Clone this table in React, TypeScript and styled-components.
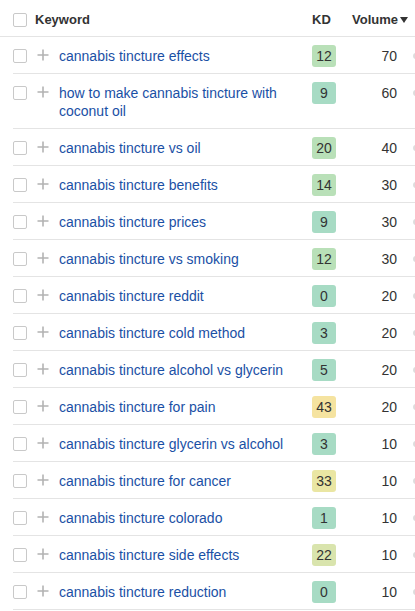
import React from "react";
import styled, { createGlobalStyle } from "styled-components";

const Global = createGlobalStyle`
  html, body { margin: 0; padding: 0; background: #fff; overflow: hidden; }
  body { font-family: "Liberation Sans", Arial, Helvetica, sans-serif; color: #333; }
`;

type Row = { kw: string; kd: number; vol: number };

const rows: Row[] = [
  { kw: "cannabis tincture effects", kd: 12, vol: 70 },
  { kw: "how to make cannabis tincture with coconut oil", kd: 9, vol: 60 },
  { kw: "cannabis tincture vs oil", kd: 20, vol: 40 },
  { kw: "cannabis tincture benefits", kd: 14, vol: 30 },
  { kw: "cannabis tincture prices", kd: 9, vol: 30 },
  { kw: "cannabis tincture vs smoking", kd: 12, vol: 30 },
  { kw: "cannabis tincture reddit", kd: 0, vol: 20 },
  { kw: "cannabis tincture cold method", kd: 3, vol: 20 },
  { kw: "cannabis tincture alcohol vs glycerin", kd: 5, vol: 20 },
  { kw: "cannabis tincture for pain", kd: 43, vol: 20 },
  { kw: "cannabis tincture glycerin vs alcohol", kd: 3, vol: 10 },
  { kw: "cannabis tincture for cancer", kd: 33, vol: 10 },
  { kw: "cannabis tincture colorado", kd: 1, vol: 10 },
  { kw: "cannabis tincture side effects", kd: 22, vol: 10 },
  { kw: "cannabis tincture reduction", kd: 0, vol: 10 },
];

const kdColor = (kd: number) => {
  if (kd <= 10) return "#a7dbc4";
  if (kd <= 20) return "#b9e0b8";
  if (kd <= 30) return "#d9e4ad";
  if (kd <= 40) return "#eae6a3";
  return "#f5e3a0";
};

const Table = styled.div`
  width: 415px;
`;

const Header = styled.div`
  display: grid;
  grid-template-columns: 22px 1fr 40px 56px 7px;
  align-items: center;
  height: 37px;
  box-sizing: border-box;
  padding: 3px 0 0 13px;
  border-bottom: 1px solid #e4e4e4;
  font-size: 13px;
  font-weight: bold;
  color: #333;
`;

const HeadCell = styled.div<{ $right?: boolean }>`
  display: flex;
  align-items: center;
  justify-content: ${(p) => (p.$right ? "flex-end" : "flex-start")};
  white-space: nowrap;
`;

const SortArrow = styled.span`
  display: inline-block;
  width: 0;
  height: 0;
  margin-left: 2px;
  border-left: 4px solid transparent;
  border-right: 4px solid transparent;
  border-top: 6px solid #333;
`;

const Checkbox = styled.span`
  display: block;
  width: 14px;
  height: 14px;
  box-sizing: border-box;
  border: 1px solid #c9c9c9;
  border-radius: 2px;
  background: #fff;
`;

const RowBox = styled.div`
  display: grid;
  grid-template-columns: 24px 22px 1fr 40px 45px 18px;
  align-items: start;
  margin-left: 13px;
  padding: 9px 0;
  border-bottom: 1px solid #e4e4e4;
  font-size: 14px;
  line-height: 18px;
`;

const CheckCell = styled.div`
  padding-top: 3px;
  height: 15px;
`;

const PlusCell = styled.div`
  padding-top: 3px;
  height: 12px;
  svg { display: block; }
`;

const Keyword = styled.a`
  display: block;
  color: #1a50a5;
  text-decoration: none;
  padding-right: 10px;
  padding-top: 1px;
  margin-bottom: -1px;
`;

const KdCell = styled.div`
  height: 18px;
`;

const Badge = styled.span<{ $bg: string }>`
  display: flex;
  align-items: center;
  justify-content: center;
  width: 24px;
  height: 22px;
  margin-top: -1px;
  border-radius: 3px;
  background: ${(p) => p.$bg};
  color: #333;
  font-size: 14px;
`;

const Volume = styled.div`
  text-align: right;
  color: #333;
  padding-top: 1px;
  height: 17px;
`;

const Edge = styled.div`
  padding: 7px 0 0 16px;
  height: 11px;
  span {
    display: block;
    width: 6px;
    height: 6px;
    border-radius: 50%;
    background: #dcdcdc;
  }
`;

const Plus = () => (
  <svg width="12" height="12" viewBox="0 0 12 12">
    <path d="M6 0.5v11M0.5 6h11" stroke="#b3b3b3" strokeWidth="1.6" fill="none" />
  </svg>
);

export default function App() {
  return (
    <Table>
      <Global />
      <Header>
        <HeadCell>
          <Checkbox />
        </HeadCell>
        <HeadCell>Keyword</HeadCell>
        <HeadCell>KD</HeadCell>
        <HeadCell $right>
          Volume
          <SortArrow />
        </HeadCell>
        <HeadCell />
      </Header>
      {rows.map((r) => (
        <RowBox key={r.kw}>
          <CheckCell>
            <Checkbox />
          </CheckCell>
          <PlusCell>
            <Plus />
          </PlusCell>
          <Keyword href="#">{r.kw}</Keyword>
          <KdCell>
            <Badge $bg={kdColor(r.kd)}>{r.kd}</Badge>
          </KdCell>
          <Volume>{r.vol}</Volume>
          <Edge>
            <span />
          </Edge>
        </RowBox>
      ))}
    </Table>
  );
}
